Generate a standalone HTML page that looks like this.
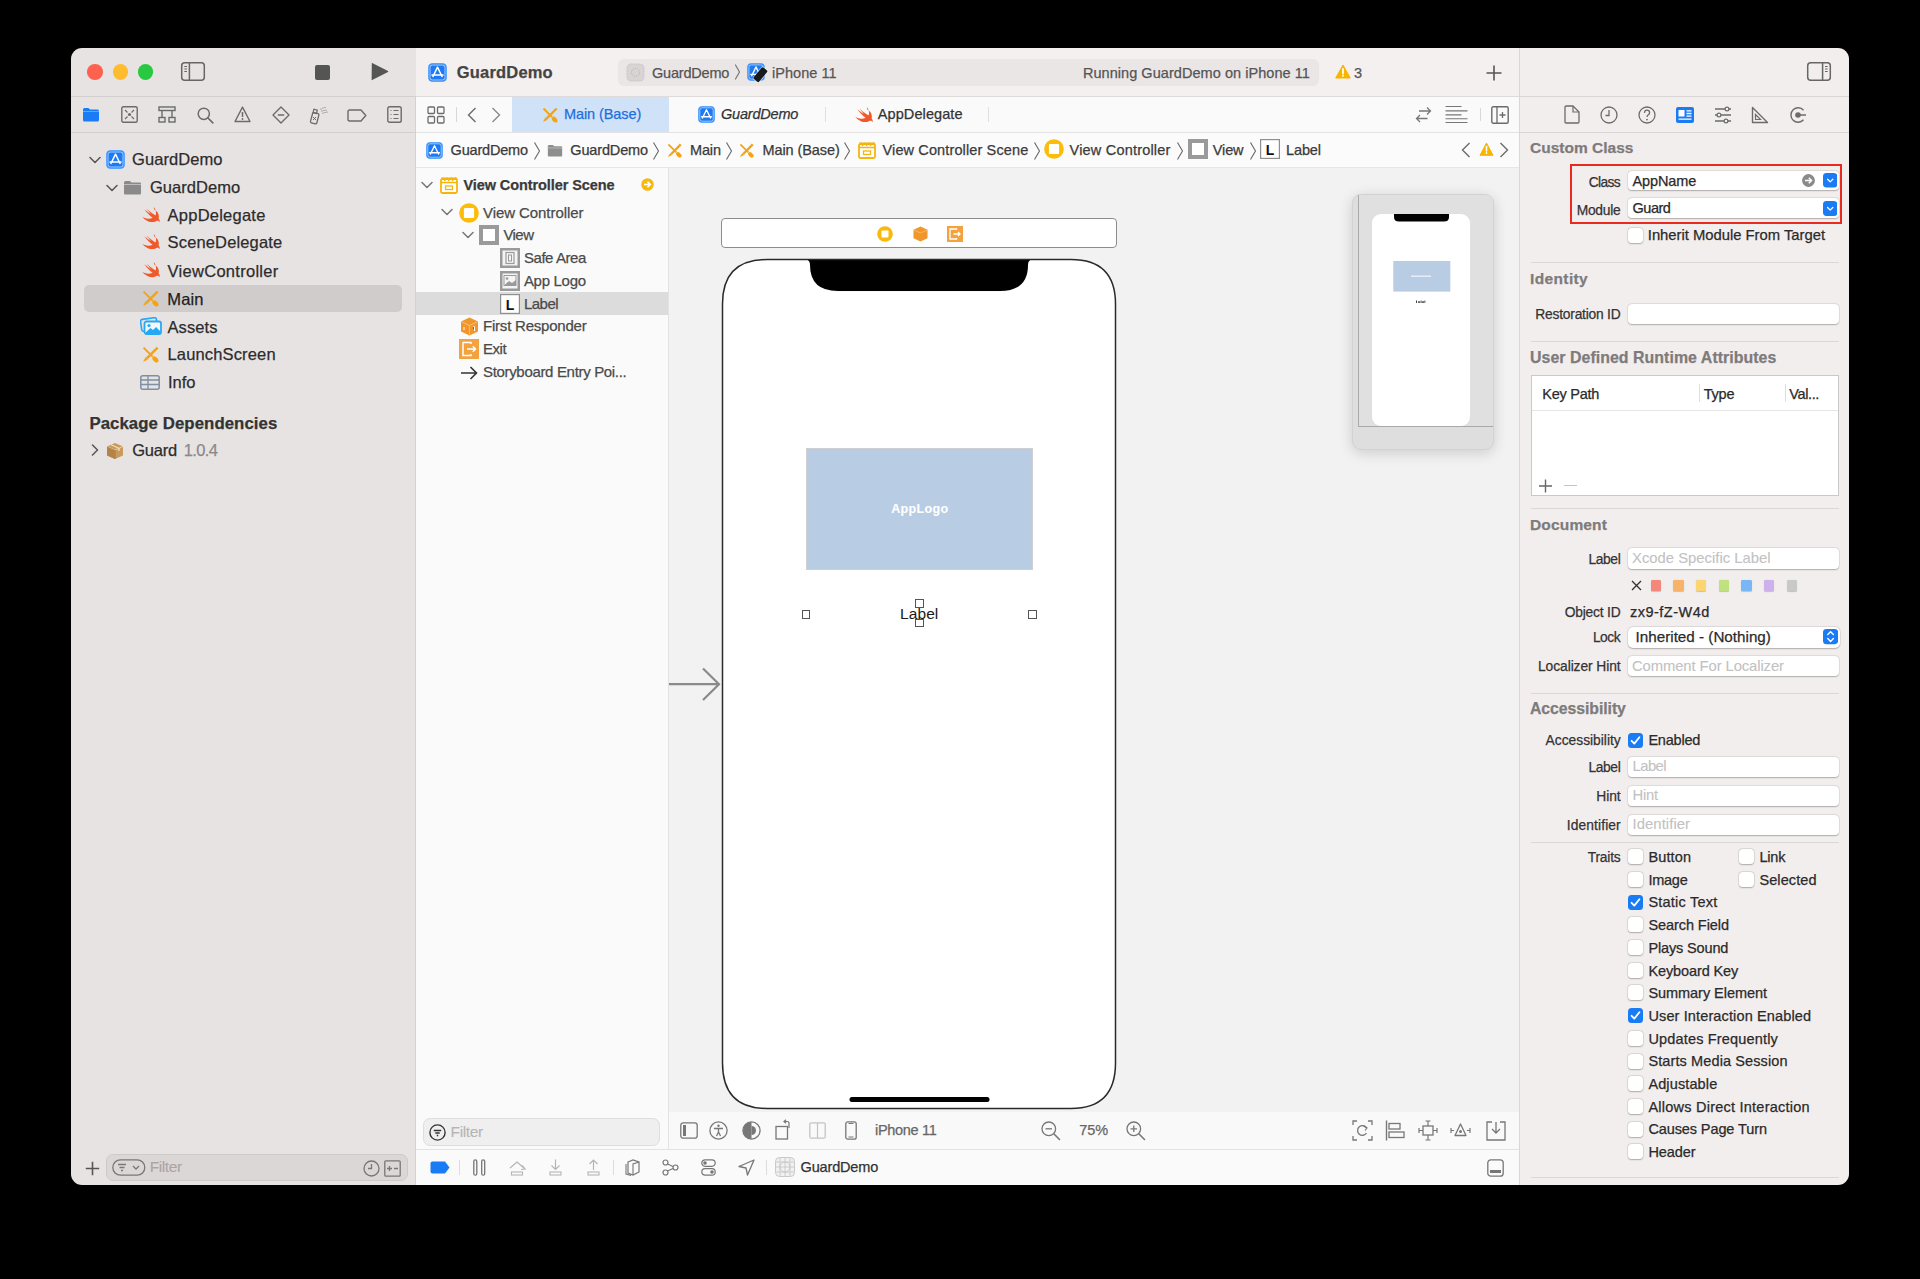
<!DOCTYPE html>
<html><head><meta charset="utf-8"><style>
html,body{margin:0;padding:0;width:1920px;height:1279px;overflow:hidden;background:#000;}
.win{position:absolute;left:71px;top:48px;width:1778px;height:1137px;border-radius:11px;overflow:hidden;}
.inner{position:absolute;left:-71px;top:-48px;width:1920px;height:1279px;}
.t{position:absolute;white-space:nowrap;font-family:"Liberation Sans",sans-serif;-webkit-text-stroke:0.25px currentColor;}
.r{position:absolute;display:block;}
</style></head><body><div class="win"><div class="inner">
<div class="r" style="left:71.00px;top:48.00px;width:345.00px;height:1137.00px;background:#e8e3e3;"></div>
<div class="r" style="left:415.00px;top:96.00px;width:1.00px;height:1089.00px;background:#d6d1d1;"></div>
<div class="r" style="left:416.00px;top:48.00px;width:1103.00px;height:48.00px;background:#f5f0f0;"></div>
<div class="r" style="left:1519.00px;top:48.00px;width:330.00px;height:1137.00px;background:#f3eeee;"></div>
<div class="r" style="left:1519.00px;top:48.00px;width:1.00px;height:1137.00px;background:#dcd7d7;"></div>
<div class="r" style="left:71.00px;top:96.00px;width:344.00px;height:1.00px;background:#d4cfcf;"></div>
<div class="r" style="left:416.00px;top:96.00px;width:1103.00px;height:1.00px;background:#e0dbdb;"></div>
<div class="r" style="left:1519.00px;top:96.00px;width:330.00px;height:1.00px;background:#dad5d5;"></div>
<div class="r" style="left:416.00px;top:97.00px;width:1103.00px;height:35.00px;background:#fafafa;"></div>
<div class="r" style="left:71.00px;top:132.00px;width:344.00px;height:1.00px;background:#d4cfcf;"></div>
<div class="r" style="left:416.00px;top:132.00px;width:1103.00px;height:1.00px;background:#e3e3e3;"></div>
<div class="r" style="left:1520.00px;top:132.00px;width:329.00px;height:1.00px;background:#dad5d5;"></div>
<div class="r" style="left:416.00px;top:133.00px;width:1103.00px;height:34.00px;background:#fbfbfb;"></div>
<div class="r" style="left:416.00px;top:167.00px;width:1103.00px;height:1.00px;background:#e6e6e6;"></div>
<div class="r" style="left:416.00px;top:168.00px;width:252.00px;height:981.00px;background:#fafafa;"></div>
<div class="r" style="left:668.00px;top:168.00px;width:1.00px;height:981.00px;background:#e2e2e2;"></div>
<div class="r" style="left:669.00px;top:168.00px;width:850.00px;height:944.00px;background:#f2f2f2;"></div>
<div class="r" style="left:669.00px;top:1112.00px;width:850.00px;height:37.00px;background:#f9f9f9;"></div>
<div class="r" style="left:416.00px;top:1149.00px;width:1103.00px;height:1.00px;background:#e3e3e3;"></div>
<div class="r" style="left:416.00px;top:1150.00px;width:1103.00px;height:35.00px;background:#fafafa;"></div>
<div class="r" style="left:87.20px;top:64.40px;width:15.6px;height:15.6px;border-radius:50%;background:#ff6150"></div>
<div class="r" style="left:112.50px;top:64.40px;width:15.6px;height:15.6px;border-radius:50%;background:#febc2e"></div>
<div class="r" style="left:137.70px;top:64.40px;width:15.6px;height:15.6px;border-radius:50%;background:#28c840"></div>
<svg class="r" style="left:180.00px;top:61.00px;" width="26" height="21" viewBox="0 0 26 21"><rect x="1.7" y="1.7" width="22.6" height="17.6" rx="3" fill="none" stroke="#666" stroke-width="1.5"/><path d="M9.4 2 V19" stroke="#666" stroke-width="1.5"/><path d="M4.3 5.5 H7 M4.3 8 H7 M4.3 10.5 H7" stroke="#666" stroke-width="1.2"/></svg>
<div class="r" style="left:315.00px;top:64.60px;width:15.20px;height:15.30px;background:#555;border-radius:2px;"></div>
<svg class="r" style="left:370.00px;top:62.00px;" width="20" height="19" viewBox="0 0 20 19"><path d="M1.8 1.2 Q1.5 0.6 2.2 0.9 L18 9 Q18.6 9.5 18 10 L2.2 18.1 Q1.5 18.4 1.6 17.7 Z" fill="#555"/></svg>
<svg class="r" style="left:428px;top:63px" width="19" height="19" viewBox="0 0 19 19"><rect x="0.5" y="0.5" width="18" height="18" rx="4" fill="#1d7af2" stroke="#5aa5ff" stroke-width="1"/><rect x="2" y="2" width="15" height="15" rx="2.5" fill="none" stroke="#cfe5ff" stroke-width="0.9" opacity="0.9"/><path d="M9.5 4.2 L5 13.5 M9.5 4.2 L14 13.5 M4 12 L15 12" stroke="#fff" stroke-width="1.5" stroke-linecap="round" fill="none"/></svg>
<div class="t" style="left:456.80px;top:64.43px;font-size:16.5px;line-height:16.5px;color:#444;font-weight:700;letter-spacing:0.18px;">GuardDemo</div>
<div class="r" style="left:618.00px;top:58.50px;width:701.00px;height:27.50px;background:#ebe6e6;border-radius:6px;"></div>
<svg class="r" style="left:626.00px;top:63.00px;" width="20" height="19" viewBox="0 0 20 19"><rect x="1" y="1" width="17" height="17" rx="4" fill="#d9d4d4" stroke="#c6c1c1" stroke-dasharray="1.5 1"/><circle cx="9.5" cy="9.5" r="4" fill="none" stroke="#bcb7b7" stroke-dasharray="1.2 1"/></svg>
<div class="t" style="left:652.00px;top:65.53px;font-size:14.5px;line-height:14.5px;color:#555;letter-spacing:-0.194px;">GuardDemo</div>
<svg class="r" style="left:734.00px;top:64.00px;" width="7" height="16" viewBox="0 0 7 16"><path d="M1.5 1 L5.5 8.0 L1.5 15" fill="none" stroke="#777" stroke-width="1.2" stroke-linecap="round" stroke-linejoin="round"/></svg>
<svg class="r" style="left:747px;top:63px" width="18" height="18" viewBox="0 0 19 19"><rect x="0.5" y="0.5" width="18" height="18" rx="4" fill="#1d7af2" stroke="#5aa5ff" stroke-width="1"/><rect x="2" y="2" width="15" height="15" rx="2.5" fill="none" stroke="#cfe5ff" stroke-width="0.9" opacity="0.9"/><path d="M9.5 4.2 L5 13.5 M9.5 4.2 L14 13.5 M4 12 L15 12" stroke="#fff" stroke-width="1.5" stroke-linecap="round" fill="none"/></svg>
<div class="r" style="left:757.00px;top:66.50px;width:6.50px;height:15.00px;background:#1a1a1a;border-radius:1.5px;transform:rotate(40deg);box-shadow:0 0 0 0.8px rgba(255,255,255,0.5)"></div>
<div class="t" style="left:772.00px;top:65.53px;font-size:14.5px;line-height:14.5px;color:#555;letter-spacing:0.046px;">iPhone 11</div>
<div class="t" style="left:1082.90px;top:65.53px;font-size:14.5px;line-height:14.5px;color:#555;letter-spacing:0.053px;">Running GuardDemo on iPhone 11</div>
<svg class="r" style="left:1335.00px;top:64.00px;" width="16" height="15" viewBox="0 0 16 15"><path d="M8 1 L15.3 14 H0.7 Z" fill="#f7b500" stroke="#f7b500" stroke-linejoin="round" stroke-width="1"/><path d="M8 5 V9.5" stroke="#fff" stroke-width="1.8" stroke-linecap="round"/><circle cx="8" cy="11.8" r="1" fill="#fff"/></svg>
<div class="t" style="left:1354.00px;top:65.53px;font-size:14.5px;line-height:14.5px;color:#555;">3</div>
<svg class="r" style="left:1486.00px;top:65.00px;" width="16" height="16" viewBox="0 0 16 16"><path d="M8 0.5 V15.5 M0.5 8 H15.5" stroke="#555" stroke-width="1.6"/></svg>
<svg class="r" style="left:1806.00px;top:61.00px;" width="26" height="21" viewBox="0 0 26 21"><rect x="1.7" y="1.7" width="22.6" height="17.6" rx="3" fill="none" stroke="#666" stroke-width="1.5"/><path d="M16.6 2 V19" stroke="#666" stroke-width="1.5"/><path d="M19 5.5 H21.7 M19 8 H21.7 M19 10.5 H21.7" stroke="#666" stroke-width="1.2"/></svg>
<svg class="r" style="left:82.00px;top:107.00px;" width="18" height="15" viewBox="0 0 18 15"><path d="M1 2.5 Q1 1 2.5 1 L6.5 1 L8 2.5 L15.5 2.5 Q17 2.5 17 4 L17 13 Q17 14.5 15.5 14.5 L2.5 14.5 Q1 14.5 1 13 Z" fill="#1a7cf5"/><rect x="1" y="4.2" width="16" height="0.8" fill="#e8e3e3" opacity="0.5"/></svg>
<svg class="r" style="left:120.50px;top:106.00px;" width="17" height="17" viewBox="0 0 17 17"><rect x="0.8" y="0.8" width="15.4" height="15.4" rx="1.5" fill="none" stroke="#6b6b6b" stroke-width="1.4"/><path d="M4 4 L6.5 6.5 M13 4 L10.5 6.5 M4 13 L6.5 10.5 M13 13 L10.5 10.5" stroke="#6b6b6b" stroke-width="1.2"/><circle cx="8.5" cy="8.5" r="1.6" fill="#6b6b6b"/></svg>
<svg class="r" style="left:158.00px;top:106.00px;" width="18" height="17" viewBox="0 0 18 17"><rect x="1" y="1" width="16" height="3.5" fill="none" stroke="#6b6b6b" stroke-width="1.4"/><path d="M4 4.5 V11.5 M14 4.5 V11.5" stroke="#6b6b6b" stroke-width="1.4"/><rect x="1" y="11.5" width="6" height="4.5" fill="none" stroke="#6b6b6b" stroke-width="1.4"/><rect x="11" y="11.5" width="6" height="4.5" fill="none" stroke="#6b6b6b" stroke-width="1.4"/></svg>
<svg class="r" style="left:196.50px;top:106.50px;" width="17" height="17" viewBox="0 0 17 17"><circle cx="6.8" cy="6.8" r="5.6" fill="none" stroke="#6b6b6b" stroke-width="1.5"/><path d="M11 11 L15.8 15.8" stroke="#6b6b6b" stroke-width="1.7" stroke-linecap="round"/></svg>
<svg class="r" style="left:234.00px;top:106.00px;" width="17" height="17" viewBox="0 0 17 17"><path d="M8.5 1.2 L16 15.5 H1 Z" fill="none" stroke="#6b6b6b" stroke-width="1.4" stroke-linejoin="round"/><path d="M8.5 6 V11" stroke="#6b6b6b" stroke-width="1.5"/><circle cx="8.5" cy="13" r="0.9" fill="#6b6b6b"/></svg>
<svg class="r" style="left:272.00px;top:106.00px;" width="18" height="18" viewBox="0 0 18 18"><path d="M9 1 L17 9 L9 17 L1 9 Z" fill="none" stroke="#6b6b6b" stroke-width="1.4" stroke-linejoin="round"/><path d="M5.8 9 H12.2" stroke="#6b6b6b" stroke-width="1.5"/></svg>
<svg class="r" style="left:309.00px;top:105.50px;" width="20" height="19" viewBox="0 0 20 19"><rect x="2.5" y="7" width="6.5" height="10.5" rx="1.2" fill="none" stroke="#6b6b6b" stroke-width="1.3" transform="rotate(15 5.7 12)"/><rect x="4.5" y="3.5" width="3.5" height="3.5" fill="none" stroke="#6b6b6b" stroke-width="1.2" transform="rotate(15 6 5)"/><path d="M4 11 L7 14 M7 11 L4 14" stroke="#6b6b6b" stroke-width="1"/><g fill="#6b6b6b"><circle cx="12" cy="3" r="0.6"/><circle cx="14" cy="2" r="0.6"/><circle cx="16" cy="1.5" r="0.6"/><circle cx="13" cy="5" r="0.6"/><circle cx="15" cy="4.5" r="0.6"/><circle cx="17" cy="4" r="0.6"/><circle cx="14" cy="7" r="0.6"/><circle cx="16" cy="6.5" r="0.6"/><circle cx="18" cy="6" r="0.6"/></g></svg>
<svg class="r" style="left:346.50px;top:108.50px;" width="20" height="13" viewBox="0 0 20 13"><path d="M2.5 1 H14 L18.8 6.5 L14 12 H2.5 Q1 12 1 10.5 V2.5 Q1 1 2.5 1 Z" fill="none" stroke="#6b6b6b" stroke-width="1.4" stroke-linejoin="round"/></svg>
<svg class="r" style="left:387.00px;top:106.00px;" width="15" height="17" viewBox="0 0 15 17"><rect x="0.8" y="0.8" width="13.4" height="15.4" rx="1.8" fill="none" stroke="#6b6b6b" stroke-width="1.4"/><path d="M3.5 4.5 H4.5 M6.5 4.5 H11.5 M3.5 8.5 H4.5 M6.5 8.5 H11.5 M3.5 12.5 H4.5 M6.5 12.5 H11.5" stroke="#6b6b6b" stroke-width="1.2"/></svg>
<svg class="r" style="left:88.50px;top:155.50px;" width="12" height="8" viewBox="0 0 12 8"><path d="M1 1.5 L6.0 6.5 L11 1.5" fill="none" stroke="#555" stroke-width="1.5" stroke-linecap="round" stroke-linejoin="round"/></svg>
<svg class="r" style="left:105.5px;top:149.8px" width="19" height="19" viewBox="0 0 19 19"><rect x="0.5" y="0.5" width="18" height="18" rx="4" fill="#1d7af2" stroke="#5aa5ff" stroke-width="1"/><rect x="2" y="2" width="15" height="15" rx="2.5" fill="none" stroke="#cfe5ff" stroke-width="0.9" opacity="0.9"/><path d="M9.5 4.2 L5 13.5 M9.5 4.2 L14 13.5 M4 12 L15 12" stroke="#fff" stroke-width="1.5" stroke-linecap="round" fill="none"/></svg>
<div class="t" style="left:132.10px;top:151.43px;font-size:16.5px;line-height:16.5px;color:#2c2c2c;letter-spacing:0.057px;">GuardDemo</div>
<svg class="r" style="left:106.00px;top:183.50px;" width="12" height="8" viewBox="0 0 12 8"><path d="M1 1.5 L6.0 6.5 L11 1.5" fill="none" stroke="#555" stroke-width="1.5" stroke-linecap="round" stroke-linejoin="round"/></svg>
<svg class="r" style="left:123.00px;top:180.00px;" width="19" height="15" viewBox="0 0 19 15"><path d="M1 2.5 Q1 1 2.5 1 L7 1 L8.5 2.5 L17 2.5 Q18 2.5 18 3.5 L18 13.5 Q18 14.5 17 14.5 L2 14.5 Q1 14.5 1 13.5 Z" fill="#8a8a8a"/><rect x="1" y="4" width="17" height="1" fill="#bdbdbd"/></svg>
<div class="t" style="left:149.90px;top:179.33px;font-size:16.5px;line-height:16.5px;color:#2c2c2c;letter-spacing:0.057px;">GuardDemo</div>
<svg class="r" style="left:141.90px;top:207.00px" width="17.8" height="15.2" viewBox="-1 0.9 21.5 19.1" preserveAspectRatio="none"><path d="M13.543 3.857c4.118 2.346 6.6 6.796 5.59 10.688-.047.189-.103.367-.165.545l.006-.006c2.037 2.508 1.478 5.19 1.213 4.682-1.088-2.13-3.114-1.586-4.14-1.052l-.2.115c-2.637 1.417-6.21 1.536-9.796.003a15.8 15.8 0 0 1-7.045-6.02c.814.604 1.69 1.134 2.622 1.569 3.774 1.773 7.547 1.65 10.208.002-3.788-2.912-7.009-6.701-9.4-9.793a12.59 12.59 0 0 1-.64-.833c2.855 2.613 7.370 5.879 8.99 6.788-3.42-3.609-6.448-8.05-6.3-7.91 5.418 5.49 10.46 8.591 10.46 8.591.18.101.316.186.42.254.103-.265.195-.538.266-.826.874-3.156-.124-6.765-2.315-9.72z" fill="#f0582a"/></svg>
<div class="t" style="left:167.60px;top:207.13px;font-size:16.5px;line-height:16.5px;color:#2c2c2c;letter-spacing:0.233px;">AppDelegate</div>
<svg class="r" style="left:141.90px;top:234.20px" width="17.8" height="15.2" viewBox="-1 0.9 21.5 19.1" preserveAspectRatio="none"><path d="M13.543 3.857c4.118 2.346 6.6 6.796 5.59 10.688-.047.189-.103.367-.165.545l.006-.006c2.037 2.508 1.478 5.19 1.213 4.682-1.088-2.13-3.114-1.586-4.14-1.052l-.2.115c-2.637 1.417-6.21 1.536-9.796.003a15.8 15.8 0 0 1-7.045-6.02c.814.604 1.69 1.134 2.622 1.569 3.774 1.773 7.547 1.65 10.208.002-3.788-2.912-7.009-6.701-9.4-9.793a12.59 12.59 0 0 1-.64-.833c2.855 2.613 7.370 5.879 8.99 6.788-3.42-3.609-6.448-8.05-6.3-7.91 5.418 5.49 10.46 8.591 10.46 8.591.18.101.316.186.42.254.103-.265.195-.538.266-.826.874-3.156-.124-6.765-2.315-9.72z" fill="#f0582a"/></svg>
<div class="t" style="left:167.60px;top:234.33px;font-size:16.5px;line-height:16.5px;color:#2c2c2c;letter-spacing:0.145px;">SceneDelegate</div>
<svg class="r" style="left:141.90px;top:262.40px" width="17.8" height="15.2" viewBox="-1 0.9 21.5 19.1" preserveAspectRatio="none"><path d="M13.543 3.857c4.118 2.346 6.6 6.796 5.59 10.688-.047.189-.103.367-.165.545l.006-.006c2.037 2.508 1.478 5.19 1.213 4.682-1.088-2.13-3.114-1.586-4.14-1.052l-.2.115c-2.637 1.417-6.21 1.536-9.796.003a15.8 15.8 0 0 1-7.045-6.02c.814.604 1.69 1.134 2.622 1.569 3.774 1.773 7.547 1.65 10.208.002-3.788-2.912-7.009-6.701-9.4-9.793a12.59 12.59 0 0 1-.64-.833c2.855 2.613 7.370 5.879 8.99 6.788-3.42-3.609-6.448-8.05-6.3-7.91 5.418 5.49 10.46 8.591 10.46 8.591.18.101.316.186.42.254.103-.265.195-.538.266-.826.874-3.156-.124-6.765-2.315-9.72z" fill="#f0582a"/></svg>
<div class="t" style="left:167.60px;top:262.53px;font-size:16.5px;line-height:16.5px;color:#2c2c2c;letter-spacing:0.281px;">ViewController</div>
<div class="r" style="left:84.00px;top:284.70px;width:317.60px;height:27.20px;background:#d1cccc;border-radius:5px;"></div>
<svg class="r" style="left:142.00px;top:290.00px;" width="17" height="17" viewBox="0 0 17 17"><path d="M15.6 1.6 L4.8 12.4" stroke="#f5a315" stroke-width="2.6"/><path d="M3.5 11.2 L5.9 13.6 L1 16 Z" fill="#f5a315"/><path d="M1.6 1.6 L10.6 10.6" stroke="#f5a315" stroke-width="2"/><ellipse cx="13.4" cy="13.4" rx="3.6" ry="2.3" transform="rotate(45 13.4 13.4)" fill="#f5a315"/></svg>
<div class="t" style="left:167.30px;top:290.78px;font-size:16.5px;line-height:16.5px;color:#1e1e1e;letter-spacing:0.098px;">Main</div>
<svg class="r" style="left:139.50px;top:317.00px;" width="22" height="18" viewBox="0 0 22 18"><rect x="1" y="1.5" width="16" height="12" rx="2" fill="none" stroke="#27a8f5" stroke-width="1.6" transform="rotate(-8 9 7)"/><rect x="4.5" y="4.5" width="16.5" height="12.5" rx="2" fill="#f2f7fb" stroke="#27a8f5" stroke-width="1.8"/><circle cx="9" cy="8.5" r="1.6" fill="#27a8f5"/><path d="M5.5 15.5 L10.5 11 L13 13 L16 10 L20 14 L20 16 L5.5 16Z" fill="#27a8f5"/></svg>
<div class="t" style="left:167.50px;top:318.53px;font-size:16.5px;line-height:16.5px;color:#2c2c2c;letter-spacing:0.1px;">Assets</div>
<svg class="r" style="left:142.00px;top:345.80px;" width="17" height="17" viewBox="0 0 17 17"><path d="M15.6 1.6 L4.8 12.4" stroke="#f5a315" stroke-width="2.6"/><path d="M3.5 11.2 L5.9 13.6 L1 16 Z" fill="#f5a315"/><path d="M1.6 1.6 L10.6 10.6" stroke="#f5a315" stroke-width="2"/><ellipse cx="13.4" cy="13.4" rx="3.6" ry="2.3" transform="rotate(45 13.4 13.4)" fill="#f5a315"/></svg>
<div class="t" style="left:167.50px;top:346.28px;font-size:16.5px;line-height:16.5px;color:#2c2c2c;letter-spacing:0.152px;">LaunchScreen</div>
<svg class="r" style="left:140.30px;top:374.50px;" width="20" height="15" viewBox="0 0 20 15"><rect x="0.8" y="0.8" width="18.4" height="13.4" rx="2" fill="none" stroke="#7d8fa3" stroke-width="1.5"/><path d="M1 5 H19 M1 9.5 H19 M8 1 V14" stroke="#7d8fa3" stroke-width="1.3"/></svg>
<div class="t" style="left:168.00px;top:373.83px;font-size:16.5px;line-height:16.5px;color:#2c2c2c;letter-spacing:-0.052px;">Info</div>
<div class="t" style="left:89.40px;top:415.78px;font-size:16.8px;line-height:16.8px;color:#333;font-weight:700;letter-spacing:0.072px;">Package Dependencies</div>
<svg class="r" style="left:91.00px;top:444.00px;" width="8" height="12" viewBox="0 0 8 12"><path d="M1.5 1 L6.5 6.0 L1.5 11" fill="none" stroke="#555" stroke-width="1.5" stroke-linecap="round" stroke-linejoin="round"/></svg>
<svg class="r" style="left:106.00px;top:441.50px;" width="18" height="18" viewBox="0 0 18 18"><path d="M9 1 L17 4.5 L17 13.5 L9 17 L1 13.5 L1 4.5 Z" fill="#c99a5b"/><path d="M1 4.5 L9 8 L17 4.5" fill="none" stroke="#e9d2a8" stroke-width="1"/><path d="M9 8 V17" stroke="#a57a40" stroke-width="1"/><path d="M1 4.5 L9 8 L9 17 L1 13.5Z" fill="#b38447"/><path d="M5 2.8 L13 6.3 L13 9" stroke="#f2e2c2" stroke-width="1.2" fill="none"/></svg>
<div class="t" style="left:132.20px;top:442.28px;font-size:16.5px;line-height:16.5px;color:#2c2c2c;letter-spacing:-0.218px;">Guard</div>
<div class="t" style="left:183.75px;top:442.28px;font-size:16.5px;line-height:16.5px;color:#8a8a8a;letter-spacing:-0.616px;">1.0.4</div>
<svg class="r" style="left:85.00px;top:1160.50px;" width="15" height="15" viewBox="0 0 15 15"><path d="M7.5 0.8 V14.2 M0.8 7.5 H14.2" stroke="#555" stroke-width="1.6"/></svg>
<div class="r" style="left:106.40px;top:1153.60px;width:301.40px;height:27.40px;background:#dcd7d7;border:1px solid #cfcaca;box-sizing:border-box;border-radius:7px;"></div>
<svg class="r" style="left:111.50px;top:1159.00px;" width="34" height="17" viewBox="0 0 34 17"><rect x="0.8" y="0.8" width="32" height="15.4" rx="7.7" fill="none" stroke="#777" stroke-width="1.3"/><path d="M6 5.5 H14 M7.5 8.5 H12.5 M9 11.5 H11" stroke="#777" stroke-width="1.3"/><path d="M21 7 L24 10 L27 7" fill="none" stroke="#777" stroke-width="1.3"/></svg>
<div class="t" style="left:149.70px;top:1159.08px;font-size:15.5px;line-height:15.5px;color:#a9a5a5;letter-spacing:-0.402px;-webkit-text-stroke:0.1px currentColor;">Filter</div>
<svg class="r" style="left:362.50px;top:1159.50px;" width="17" height="17" viewBox="0 0 17 17"><circle cx="8.5" cy="8.5" r="7.5" fill="none" stroke="#777" stroke-width="1.3"/><path d="M8.5 4 V8.5 H5" fill="none" stroke="#777" stroke-width="1.3"/></svg>
<svg class="r" style="left:384.00px;top:1159.50px;" width="17" height="17" viewBox="0 0 17 17"><rect x="0.8" y="0.8" width="15.4" height="15.4" rx="1" fill="none" stroke="#777" stroke-width="1.3"/><path d="M3 8.5 H8 M5.5 6 V11 M10 8.5 H14" stroke="#777" stroke-width="1.3"/></svg>
<svg class="r" style="left:426.50px;top:105.50px;" width="18" height="18" viewBox="0 0 18 18"><g fill="none" stroke="#6b6b6b" stroke-width="1.3"><rect x="1" y="1" width="6.5" height="6.5" rx="1"/><rect x="10.5" y="1" width="6.5" height="6.5" rx="1"/><rect x="1" y="10.5" width="6.5" height="6.5" rx="1"/><rect x="10.5" y="10.5" width="6.5" height="6.5" rx="1"/></g></svg>
<div class="r" style="left:455.50px;top:107.00px;width:1.00px;height:15.00px;background:#d8d8d8;"></div>
<svg class="r" style="left:467.00px;top:107.00px;" width="10" height="16" viewBox="0 0 10 16"><path d="M8.5 1 L1.5 8 L8.5 15" fill="none" stroke="#6b6b6b" stroke-width="1.4"/></svg>
<svg class="r" style="left:491.00px;top:107.00px;" width="10" height="16" viewBox="0 0 10 16"><path d="M1.5 1 L8.5 8 L1.5 15" fill="none" stroke="#8a8a8a" stroke-width="1.4"/></svg>
<div class="r" style="left:512.00px;top:97.00px;width:156.50px;height:35.00px;background:#cfe2f7;"></div>
<svg class="r" style="left:541.50px;top:106.50px;" width="16" height="16" viewBox="0 0 17 17"><path d="M15.6 1.6 L4.8 12.4" stroke="#f5a315" stroke-width="2.6"/><path d="M3.5 11.2 L5.9 13.6 L1 16 Z" fill="#f5a315"/><path d="M1.6 1.6 L10.6 10.6" stroke="#f5a315" stroke-width="2"/><ellipse cx="13.4" cy="13.4" rx="3.6" ry="2.3" transform="rotate(45 13.4 13.4)" fill="#f5a315"/></svg>
<div class="t" style="left:564.00px;top:107.43px;font-size:14.5px;line-height:14.5px;color:#1f6fe0;letter-spacing:-0.091px;">Main (Base)</div>
<svg class="r" style="left:697.5px;top:105.5px" width="17" height="17" viewBox="0 0 19 19"><rect x="0.5" y="0.5" width="18" height="18" rx="4" fill="#1d7af2" stroke="#5aa5ff" stroke-width="1"/><rect x="2" y="2" width="15" height="15" rx="2.5" fill="none" stroke="#cfe5ff" stroke-width="0.9" opacity="0.9"/><path d="M9.5 4.2 L5 13.5 M9.5 4.2 L14 13.5 M4 12 L15 12" stroke="#fff" stroke-width="1.5" stroke-linecap="round" fill="none"/></svg>
<div class="t" style="left:721.00px;top:107.43px;font-size:14.5px;line-height:14.5px;color:#333;font-style:italic;letter-spacing:-0.194px;">GuardDemo</div>
<div class="r" style="left:825.00px;top:107.00px;width:1.00px;height:15.00px;background:#e0e0e0;"></div>
<svg class="r" style="left:855.00px;top:106.50px" width="17.8" height="15.2" viewBox="-1 0.9 21.5 19.1" preserveAspectRatio="none"><path d="M13.543 3.857c4.118 2.346 6.6 6.796 5.59 10.688-.047.189-.103.367-.165.545l.006-.006c2.037 2.508 1.478 5.19 1.213 4.682-1.088-2.13-3.114-1.586-4.14-1.052l-.2.115c-2.637 1.417-6.21 1.536-9.796.003a15.8 15.8 0 0 1-7.045-6.02c.814.604 1.69 1.134 2.622 1.569 3.774 1.773 7.547 1.65 10.208.002-3.788-2.912-7.009-6.701-9.4-9.793a12.59 12.59 0 0 1-.64-.833c2.855 2.613 7.370 5.879 8.99 6.788-3.42-3.609-6.448-8.05-6.3-7.91 5.418 5.49 10.46 8.591 10.46 8.591.18.101.316.186.42.254.103-.265.195-.538.266-.826.874-3.156-.124-6.765-2.315-9.72z" fill="#f0582a"/></svg>
<div class="t" style="left:877.80px;top:107.43px;font-size:14.5px;line-height:14.5px;color:#333;letter-spacing:0.089px;">AppDelegate</div>
<div class="r" style="left:988.00px;top:107.00px;width:1.00px;height:15.00px;background:#e0e0e0;"></div>
<svg class="r" style="left:1415.00px;top:105.50px;" width="17" height="18" viewBox="0 0 17 18"><path d="M4 5 H15.5 M12 1.5 L15.5 5 L12 8.5" fill="none" stroke="#777" stroke-width="1.3"/><path d="M12.5 12.5 H1.5 M5 9 L1.5 12.5 L5 16" fill="none" stroke="#777" stroke-width="1.3"/></svg>
<svg class="r" style="left:1444.50px;top:104.80px;" width="24" height="18" viewBox="0 0 24 18"><path d="M0.5 1.5 H16.5 M0.5 5.9 H22.5 M0.5 9.8 H16.5 M0.5 13.7 H22.5 M0.5 17.5 H22.5" stroke="#777" stroke-width="1.15"/></svg>
<div class="r" style="left:1480.00px;top:108.00px;width:1.00px;height:13.00px;background:#d8d8d8;"></div>
<svg class="r" style="left:1490.50px;top:105.50px;" width="18" height="18" viewBox="0 0 18 18"><rect x="0.8" y="0.8" width="16.4" height="16.4" rx="1.5" fill="none" stroke="#6b6b6b" stroke-width="1.4"/><path d="M6 1 V17 M8.5 9 H14.5 M11.5 6 V12" stroke="#6b6b6b" stroke-width="1.3"/></svg>
<svg class="r" style="left:426px;top:141.5px" width="17" height="17" viewBox="0 0 19 19"><rect x="0.5" y="0.5" width="18" height="18" rx="4" fill="#1d7af2" stroke="#5aa5ff" stroke-width="1"/><rect x="2" y="2" width="15" height="15" rx="2.5" fill="none" stroke="#cfe5ff" stroke-width="0.9" opacity="0.9"/><path d="M9.5 4.2 L5 13.5 M9.5 4.2 L14 13.5 M4 12 L15 12" stroke="#fff" stroke-width="1.5" stroke-linecap="round" fill="none"/></svg>
<div class="t" style="left:450.60px;top:142.73px;font-size:14.5px;line-height:14.5px;color:#3a3a3a;letter-spacing:-0.194px;">GuardDemo</div>
<svg class="r" style="left:532.50px;top:141.00px;" width="8" height="20" viewBox="0 0 8 20"><path d="M1.5 1.5 L6.5 10 L1.5 18.5" fill="none" stroke="#666" stroke-width="1.1"/></svg>
<svg class="r" style="left:546.50px;top:143.50px;" width="16" height="13" viewBox="0 0 19 15"><path d="M1 2.5 Q1 1 2.5 1 L7 1 L8.5 2.5 L17 2.5 Q18 2.5 18 3.5 L18 13.5 Q18 14.5 17 14.5 L2 14.5 Q1 14.5 1 13.5 Z" fill="#8e8e8e"/><rect x="1" y="4" width="17" height="1" fill="#bdbdbd"/></svg>
<div class="t" style="left:570.30px;top:142.73px;font-size:14.5px;line-height:14.5px;color:#3a3a3a;letter-spacing:-0.157px;">GuardDemo</div>
<svg class="r" style="left:651.50px;top:141.00px;" width="8" height="20" viewBox="0 0 8 20"><path d="M1.5 1.5 L6.5 10 L1.5 18.5" fill="none" stroke="#666" stroke-width="1.1"/></svg>
<svg class="r" style="left:666.50px;top:143.00px;" width="15" height="15" viewBox="0 0 17 17"><path d="M15.6 1.6 L4.8 12.4" stroke="#f5a315" stroke-width="2.6"/><path d="M3.5 11.2 L5.9 13.6 L1 16 Z" fill="#f5a315"/><path d="M1.6 1.6 L10.6 10.6" stroke="#f5a315" stroke-width="2"/><ellipse cx="13.4" cy="13.4" rx="3.6" ry="2.3" transform="rotate(45 13.4 13.4)" fill="#f5a315"/></svg>
<div class="t" style="left:690.00px;top:142.73px;font-size:14.5px;line-height:14.5px;color:#3a3a3a;letter-spacing:-0.155px;">Main</div>
<svg class="r" style="left:724.50px;top:141.00px;" width="8" height="20" viewBox="0 0 8 20"><path d="M1.5 1.5 L6.5 10 L1.5 18.5" fill="none" stroke="#666" stroke-width="1.1"/></svg>
<svg class="r" style="left:738.50px;top:143.00px;" width="15" height="15" viewBox="0 0 17 17"><path d="M15.6 1.6 L4.8 12.4" stroke="#f5a315" stroke-width="2.6"/><path d="M3.5 11.2 L5.9 13.6 L1 16 Z" fill="#f5a315"/><path d="M1.6 1.6 L10.6 10.6" stroke="#f5a315" stroke-width="2"/><ellipse cx="13.4" cy="13.4" rx="3.6" ry="2.3" transform="rotate(45 13.4 13.4)" fill="#f5a315"/></svg>
<div class="t" style="left:762.50px;top:142.73px;font-size:14.5px;line-height:14.5px;color:#3a3a3a;letter-spacing:-0.095px;">Main (Base)</div>
<svg class="r" style="left:842.50px;top:141.00px;" width="8" height="20" viewBox="0 0 8 20"><path d="M1.5 1.5 L6.5 10 L1.5 18.5" fill="none" stroke="#666" stroke-width="1.1"/></svg>
<svg class="r" style="left:858.00px;top:140.50px;" width="18" height="18" viewBox="0 0 18 18"><rect x="1" y="3" width="16" height="14" rx="1.5" fill="#fff" stroke="#f5b50c" stroke-width="1.8"/><path d="M1 6.5 H17" stroke="#f5b50c" stroke-width="1.6"/><path d="M3 1.5 L5 5 M7 1.5 L9 5 M11 1.5 L13 5 M15 1.5 L17 4" stroke="#f5b50c" stroke-width="1.5"/><rect x="5.5" y="10" width="7" height="3.5" fill="none" stroke="#f5b50c" stroke-width="1.3"/><rect x="1" y="1" width="16" height="2.5" fill="#f5b50c" opacity="0.5"/></svg>
<div class="t" style="left:882.50px;top:142.73px;font-size:14.5px;line-height:14.5px;color:#3a3a3a;letter-spacing:0.126px;">View Controller Scene</div>
<svg class="r" style="left:1032.50px;top:141.00px;" width="8" height="20" viewBox="0 0 8 20"><path d="M1.5 1.5 L6.5 10 L1.5 18.5" fill="none" stroke="#666" stroke-width="1.1"/></svg>
<svg class="r" style="left:1044.00px;top:139.30px;" width="20" height="20" viewBox="0 0 20 20"><circle cx="10" cy="10" r="9.8" fill="#fbbc0c"/><rect x="4.9" y="4.9" width="10.2" height="10.2" rx="1.2" fill="#fff"/></svg>
<div class="t" style="left:1069.60px;top:142.73px;font-size:14.5px;line-height:14.5px;color:#3a3a3a;letter-spacing:0.193px;">View Controller</div>
<svg class="r" style="left:1175.50px;top:141.00px;" width="8" height="20" viewBox="0 0 8 20"><path d="M1.5 1.5 L6.5 10 L1.5 18.5" fill="none" stroke="#666" stroke-width="1.1"/></svg>
<svg class="r" style="left:1187.50px;top:139.30px;" width="20" height="20" viewBox="0 0 20 20"><rect x="0" y="0" width="20" height="20" fill="#9a9a9a"/><rect x="4" y="4" width="12" height="12" fill="#fff"/></svg>
<div class="t" style="left:1212.70px;top:142.73px;font-size:14.5px;line-height:14.5px;color:#3a3a3a;letter-spacing:-0.092px;">View</div>
<svg class="r" style="left:1248.50px;top:141.00px;" width="8" height="20" viewBox="0 0 8 20"><path d="M1.5 1.5 L6.5 10 L1.5 18.5" fill="none" stroke="#666" stroke-width="1.1"/></svg>
<svg class="r" style="left:1260.30px;top:139.30px;" width="20" height="20" viewBox="0 0 20 20"><rect x="0.6" y="0.6" width="18.8" height="18.8" fill="#fff" stroke="#8f8f8f" stroke-width="1.2"/><text x="10" y="15.5" text-anchor="middle" font-family="Liberation Sans, sans-serif" font-weight="700" font-size="14" fill="#111">L</text></svg>
<div class="t" style="left:1286.00px;top:142.73px;font-size:14.5px;line-height:14.5px;color:#3a3a3a;letter-spacing:-0.113px;">Label</div>
<svg class="r" style="left:1461.00px;top:141.50px;" width="10" height="16" viewBox="0 0 10 16"><path d="M8.5 1 L1.5 8 L8.5 15" fill="none" stroke="#6b6b6b" stroke-width="1.4"/></svg>
<svg class="r" style="left:1478.50px;top:141.50px;" width="15" height="14" viewBox="0 0 15 14"><path d="M7.5 1 L14 13.3 H1 Z" fill="#f7b500" stroke="#f7b500" stroke-linejoin="round"/><path d="M7.5 4.5 V9" stroke="#fff" stroke-width="1.6" stroke-linecap="round"/><circle cx="7.5" cy="11" r="0.9" fill="#fff"/></svg>
<svg class="r" style="left:1499.00px;top:141.50px;" width="10" height="16" viewBox="0 0 10 16"><path d="M1.5 1 L8.5 8 L1.5 15" fill="none" stroke="#6b6b6b" stroke-width="1.4"/></svg>
<svg class="r" style="left:421.00px;top:180.50px;" width="12" height="8" viewBox="0 0 12 8"><path d="M1 1.5 L6.0 6.5 L11 1.5" fill="none" stroke="#777" stroke-width="1.5" stroke-linecap="round" stroke-linejoin="round"/></svg>
<svg class="r" style="left:440.00px;top:176.00px;" width="18" height="18" viewBox="0 0 18 18"><rect x="1" y="3" width="16" height="14" rx="1.5" fill="#fff" stroke="#f5b50c" stroke-width="1.8"/><path d="M1 6.5 H17" stroke="#f5b50c" stroke-width="1.6"/><path d="M3 1.5 L5 5 M7 1.5 L9 5 M11 1.5 L13 5 M15 1.5 L17 4" stroke="#f5b50c" stroke-width="1.5"/><rect x="5.5" y="10" width="7" height="3.5" fill="none" stroke="#f5b50c" stroke-width="1.3"/><rect x="1" y="1" width="16" height="2.5" fill="#f5b50c" opacity="0.5"/></svg>
<div class="t" style="left:463.50px;top:177.73px;font-size:14.5px;line-height:14.5px;color:#3a3a3a;font-weight:700;letter-spacing:-0.091px;">View Controller Scene</div>
<svg class="r" style="left:640.50px;top:178.20px;" width="13" height="13" viewBox="0 0 13 13"><circle cx="6.5" cy="6.5" r="6.3" fill="#f9b90b"/><path d="M3 6.5 H9 M6.5 3.8 L9.3 6.5 L6.5 9.2" fill="none" stroke="#fff" stroke-width="1.6"/></svg>
<svg class="r" style="left:441.00px;top:208.00px;" width="12" height="8" viewBox="0 0 12 8"><path d="M1 1.5 L6.0 6.5 L11 1.5" fill="none" stroke="#777" stroke-width="1.5" stroke-linecap="round" stroke-linejoin="round"/></svg>
<svg class="r" style="left:459.00px;top:202.70px;" width="20" height="20" viewBox="0 0 20 20"><circle cx="10" cy="10" r="9.8" fill="#fbbc0c"/><rect x="4.9" y="4.9" width="10.2" height="10.2" rx="1.2" fill="#fff"/></svg>
<div class="t" style="left:483.00px;top:204.50px;font-size:15px;line-height:15px;color:#4a4a4a;letter-spacing:-0.07px;">View Controller</div>
<svg class="r" style="left:461.50px;top:231.00px;" width="12" height="8" viewBox="0 0 12 8"><path d="M1 1.5 L6.0 6.5 L11 1.5" fill="none" stroke="#777" stroke-width="1.5" stroke-linecap="round" stroke-linejoin="round"/></svg>
<svg class="r" style="left:479.00px;top:225.20px;" width="20" height="20" viewBox="0 0 20 20"><rect x="0" y="0" width="20" height="20" fill="#9a9a9a"/><rect x="4" y="4" width="12" height="12" fill="#fff"/></svg>
<div class="t" style="left:503.40px;top:227.00px;font-size:15px;line-height:15px;color:#4a4a4a;letter-spacing:-0.55px;">View</div>
<svg class="r" style="left:499.50px;top:248.00px;" width="20" height="20" viewBox="0 0 20 20"><rect x="0" y="0" width="20" height="20" fill="#9a9a9a"/><rect x="2.5" y="2.5" width="15" height="15" fill="#f4f4f4"/><rect x="6" y="4.5" width="8" height="11" fill="none" stroke="#9a9a9a" stroke-width="1.2"/><rect x="8.5" y="7" width="3" height="6" fill="none" stroke="#9a9a9a" stroke-width="1"/></svg>
<div class="t" style="left:523.90px;top:250.10px;font-size:15px;line-height:15px;color:#4a4a4a;letter-spacing:-0.428px;">Safe Area</div>
<svg class="r" style="left:499.50px;top:271.00px;" width="20" height="20" viewBox="0 0 20 20"><rect x="0" y="0" width="20" height="20" fill="#9a9a9a"/><rect x="2.5" y="2.5" width="15" height="15" fill="#f4f4f4"/><rect x="4" y="4.5" width="12" height="10" fill="none" stroke="#9a9a9a" stroke-width="1"/><circle cx="7" cy="7.5" r="1.3" fill="#9a9a9a"/><path d="M4 14.5 L9 10 L12 12 L16 9 V14.5Z" fill="#9a9a9a"/></svg>
<div class="t" style="left:523.90px;top:272.60px;font-size:15px;line-height:15px;color:#4a4a4a;letter-spacing:-0.3px;">App Logo</div>
<div class="r" style="left:416.00px;top:292.30px;width:252.00px;height:22.50px;background:#dcdcdc;"></div>
<svg class="r" style="left:499.50px;top:293.60px;" width="20" height="20" viewBox="0 0 20 20"><rect x="0.6" y="0.6" width="18.8" height="18.8" fill="#fff" stroke="#8f8f8f" stroke-width="1.2"/><text x="10" y="15.5" text-anchor="middle" font-family="Liberation Sans, sans-serif" font-weight="700" font-size="14" fill="#111">L</text></svg>
<div class="t" style="left:523.90px;top:295.50px;font-size:15px;line-height:15px;color:#4a4a4a;letter-spacing:-0.494px;">Label</div>
<svg class="r" style="left:459.50px;top:317.00px;" width="19" height="19" viewBox="0 0 19 19"><path d="M9.5 0.5 L18 4.5 L18 14.5 L9.5 18.5 L1 14.5 L1 4.5 Z" fill="#f0962a"/><path d="M1 4.5 L9.5 8.5 L18 4.5" fill="none" stroke="#f9c27a" stroke-width="1"/><path d="M9.5 8.5 V18.5" stroke="#f9c27a" stroke-width="0.8"/><path d="M4 10 V13 M13 10 L14.5 9.5 V14" stroke="#fff" stroke-width="1"/></svg>
<div class="t" style="left:483.00px;top:318.30px;font-size:15px;line-height:15px;color:#4a4a4a;letter-spacing:-0.216px;">First Responder</div>
<svg class="r" style="left:459.30px;top:339.00px;" width="20" height="20" viewBox="0 0 20 20"><rect x="0" y="0" width="20" height="20" fill="#f3a23d"/><path d="M12 5 V3.5 H4 V16.5 H12 V15" fill="none" stroke="#fff" stroke-width="1.5"/><path d="M8 10 H16.5 M13.8 7.3 L16.5 10 L13.8 12.7" fill="none" stroke="#fff" stroke-width="1.5"/></svg>
<div class="t" style="left:483.00px;top:340.90px;font-size:15px;line-height:15px;color:#4a4a4a;letter-spacing:-0.458px;">Exit</div>
<svg class="r" style="left:460.00px;top:366.00px;" width="18" height="14" viewBox="0 0 18 14"><path d="M1 7 H16.5 M10.5 1 L16.5 7 L10.5 13" fill="none" stroke="#333" stroke-width="1.6"/></svg>
<div class="t" style="left:483.00px;top:364.00px;font-size:15px;line-height:15px;color:#4a4a4a;letter-spacing:-0.327px;">Storyboard Entry Poi...</div>
<div class="r" style="left:422.60px;top:1118.30px;width:237.00px;height:27.40px;background:#efefef;border:1px solid #dedede;box-sizing:border-box;border-radius:7px;"></div>
<svg class="r" style="left:428.50px;top:1123.50px;" width="17" height="17" viewBox="0 0 17 17"><circle cx="8.5" cy="8.5" r="7.6" fill="none" stroke="#333" stroke-width="1.4"/><path d="M4.8 6.5 H12.2 M6.3 9 H10.7 M7.8 11.5 H9.2" stroke="#333" stroke-width="1.3"/></svg>
<div class="t" style="left:450.60px;top:1124.08px;font-size:15.5px;line-height:15.5px;color:#b5b5b5;letter-spacing:-0.362px;-webkit-text-stroke:0.1px currentColor;">Filter</div>
<div class="r" style="left:721.00px;top:218.00px;width:396.00px;height:30.00px;background:#fff;border:1px solid #8c8c8c;box-sizing:border-box;border-radius:4px;"></div>
<svg class="r" style="left:877.00px;top:225.50px;" width="16" height="16" viewBox="0 0 16 16"><circle cx="8" cy="8" r="7.8" fill="#f9b90b"/><rect x="4.5" y="4.5" width="7" height="7" rx="0.8" fill="#fff"/></svg>
<svg class="r" style="left:912.50px;top:225.50px;" width="15" height="16" viewBox="0 0 15 16"><path d="M7.5 0.5 L14.5 3.8 L14.5 12.2 L7.5 15.5 L0.5 12.2 L0.5 3.8 Z" fill="#f0962a"/><path d="M0.5 3.8 L7.5 7 L14.5 3.8" fill="none" stroke="#f9c27a" stroke-width="0.8"/></svg>
<svg class="r" style="left:947.00px;top:225.50px;" width="16" height="16" viewBox="0 0 16 16"><rect x="0" y="0" width="16" height="16" fill="#f3a23d"/><path d="M9.5 4 V3 H3 V13 H9.5 V12" fill="none" stroke="#fff" stroke-width="1.3"/><path d="M6.5 8 H13 M11 6 L13 8 L11 10" fill="none" stroke="#fff" stroke-width="1.3"/></svg>
<svg class="r" style="left:720.00px;top:257.00px;" width="398" height="854" viewBox="0 0 398 854"><path d="M2.5 47 Q2.5 2.5 47 2.5 L87 2.5 Q90 2.5 90 6 Q90 34.5 118 34.5 L280 34.5 Q308 34.5 308 6 Q308 2.5 311 2.5 L351 2.5 Q395.5 2.5 395.5 47 L395.5 806 Q395.5 851.5 351 851.5 L47 851.5 Q2.5 851.5 2.5 806 Z" fill="#fff"/><path d="M86 2.5 L312 2.5 Q308 3 308 8 Q308 34 280 34 L118 34 Q90 34 90 8 Q90 3 86 2.5 Z" fill="#000"/><path d="M2.5 47 Q2.5 2.5 47 2.5 L351 2.5 Q395.5 2.5 395.5 47 L395.5 806 Q395.5 851.5 351 851.5 L47 851.5 Q2.5 851.5 2.5 806 Z" fill="none" stroke="#2a2a2a" stroke-width="1.5"/><rect x="129.5" y="840" width="140" height="5" rx="2.5" fill="#000"/></svg>
<div class="r" style="left:805.50px;top:448.00px;width:227.70px;height:121.50px;background:#b8cce4;border:1.5px solid #d0d0d0;box-sizing:border-box;"></div>
<div class="t" style="left:891.25px;top:503.17px;font-size:12.5px;line-height:12.5px;color:#fff;font-weight:700;letter-spacing:0.323px;-webkit-text-stroke:0.1px currentColor;">AppLogo</div>
<div class="t" style="left:900.00px;top:605.63px;font-size:15.5px;line-height:15.5px;color:#1a1a1a;letter-spacing:0.088px;-webkit-text-stroke:0">Label</div>
<div class="r" style="left:801.70px;top:610.00px;width:8.80px;height:8.80px;background:#fff;border:1.5px solid #555;box-sizing:border-box;"></div>
<div class="r" style="left:1028.00px;top:610.00px;width:8.80px;height:8.80px;background:#fff;border:1.5px solid #555;box-sizing:border-box;"></div>
<div class="r" style="left:915.00px;top:599.40px;width:8.80px;height:8.80px;background:#fff;border:1.5px solid #555;box-sizing:border-box;"></div>
<div class="r" style="left:915.00px;top:618.70px;width:8.80px;height:8.80px;background:#fff;border:1.5px solid #555;box-sizing:border-box;"></div>
<svg class="r" style="left:668.00px;top:666.00px;" width="54" height="36" viewBox="0 0 54 36"><path d="M1 18.2 H51 M35 2.5 L51 18.2 L35 34" fill="none" stroke="#8a8a8a" stroke-width="2.2"/></svg>
<div class="r" style="left:1352.00px;top:193.60px;width:142.00px;height:256.40px;background:#dedede;border:1px solid #d2d2d2;box-sizing:border-box;border-radius:9px;box-shadow:0 3px 14px rgba(0,0,0,0.16);"></div>
<div class="r" style="left:1358.00px;top:194.50px;width:135.00px;height:232.50px;background:#e0e0e0;border-left:1.2px solid #a9a9a9;border-bottom:1.2px solid #a9a9a9;box-sizing:border-box;border-top-right-radius:8px;"></div>
<svg class="r" style="left:1371.50px;top:214.00px;" width="98" height="212" viewBox="0 0 98 212"><rect x="0" y="0" width="98" height="212" rx="9" fill="#fff"/><path d="M22 0 H77 V3 Q77 7.5 72 7.5 H27 Q22 7.5 22 3 Z" fill="#000"/><rect x="21.3" y="47" width="57" height="30.6" fill="#b8cce4"/><rect x="44" y="86.5" width="1" height="2.5" fill="#444"/><rect x="46" y="87.2" width="2.2" height="1.8" fill="#666"/><rect x="48.6" y="86.5" width="1" height="2.5" fill="#555"/><rect x="50" y="87.2" width="2" height="1.8" fill="#666"/><rect x="52.4" y="86.5" width="0.9" height="2.5" fill="#444"/><rect x="39" y="61.5" width="20" height="1.4" fill="#fff" opacity="0.7"/></svg>
<svg class="r" style="left:679.50px;top:1121.50px;" width="18" height="17" viewBox="0 0 18 17"><rect x="0.8" y="0.8" width="16.4" height="15.4" rx="2.5" fill="none" stroke="#777" stroke-width="1.3"/><rect x="3" y="3" width="3" height="11" fill="#777"/></svg>
<svg class="r" style="left:708.50px;top:1121.00px;" width="19" height="19" viewBox="0 0 19 19"><circle cx="9.5" cy="9.5" r="8.6" fill="none" stroke="#777" stroke-width="1.3"/><circle cx="9.5" cy="4.8" r="1.2" fill="#777"/><path d="M5 7.5 H14 M9.5 7.5 V11 M9.5 11 L7.5 15 M9.5 11 L11.5 15" fill="none" stroke="#777" stroke-width="1.3"/></svg>
<svg class="r" style="left:741.50px;top:1121.00px;" width="19" height="19" viewBox="0 0 19 19"><circle cx="9.5" cy="9.5" r="8.6" fill="none" stroke="#777" stroke-width="1.3"/><path d="M9.5 1 A8.5 8.5 0 0 0 9.5 18 Z" fill="#777"/><path d="M9.5 5 A4.5 4.5 0 0 1 9.5 14 Z" fill="#777"/></svg>
<svg class="r" style="left:774.50px;top:1119.00px;" width="20" height="21" viewBox="0 0 20 21"><rect x="1" y="7.5" width="11.5" height="12.5" fill="none" stroke="#777" stroke-width="1.3"/><path d="M14 9 V4.5 Q14 2.5 12 2.5 L9 2.5 M11 0.8 L9 2.5 L11 4.2" fill="none" stroke="#777" stroke-width="1.2"/></svg>
<svg class="r" style="left:809.00px;top:1121.50px;" width="17" height="17" viewBox="0 0 17 17"><rect x="0.8" y="0.8" width="15.4" height="15.4" rx="1.5" fill="none" stroke="#c4c4c4" stroke-width="1.3"/><path d="M8.5 1 V16" stroke="#c4c4c4" stroke-width="1.2"/></svg>
<svg class="r" style="left:845.00px;top:1120.50px;" width="12" height="19" viewBox="0 0 12 19"><rect x="0.8" y="0.8" width="10.4" height="17.4" rx="2" fill="none" stroke="#777" stroke-width="1.3"/><path d="M3.5 2.5 H8.5 M3.5 16 H8.5" stroke="#777" stroke-width="1"/></svg>
<div class="t" style="left:875.00px;top:1122.73px;font-size:14.5px;line-height:14.5px;color:#666;letter-spacing:-0.311px;">iPhone 11</div>
<svg class="r" style="left:1041.00px;top:1120.50px;" width="20" height="20" viewBox="0 0 20 20"><circle cx="7.8" cy="7.8" r="6.8" fill="none" stroke="#777" stroke-width="1.3"/><path d="M4.5 7.8 H11" stroke="#777" stroke-width="1.3"/><path d="M12.8 12.8 L18.5 18.5" stroke="#777" stroke-width="1.6" stroke-linecap="round"/></svg>
<div class="t" style="left:1079.25px;top:1122.73px;font-size:14.5px;line-height:14.5px;color:#666;letter-spacing:-0.125px;">75%</div>
<svg class="r" style="left:1126.00px;top:1120.50px;" width="20" height="20" viewBox="0 0 20 20"><circle cx="7.8" cy="7.8" r="6.8" fill="none" stroke="#777" stroke-width="1.3"/><path d="M4.5 7.8 H11 M7.8 4.5 V11" stroke="#777" stroke-width="1.3"/><path d="M12.8 12.8 L18.5 18.5" stroke="#777" stroke-width="1.6" stroke-linecap="round"/></svg>
<svg class="r" style="left:1351.50px;top:1120.00px;" width="21" height="21" viewBox="0 0 21 21"><path d="M1 5 V1 H5 M16 1 H20 V5 M20 16 V20 H16 M5 20 H1 V16" fill="none" stroke="#777" stroke-width="1.3"/><path d="M14.5 8 A4.8 4.8 0 1 0 14.5 13" fill="none" stroke="#777" stroke-width="1.3"/><path d="M12 6 L15 8 L13 10.5" fill="none" stroke="#777" stroke-width="1.2"/></svg>
<svg class="r" style="left:1384.50px;top:1120.00px;" width="20" height="21" viewBox="0 0 20 21"><path d="M1.5 0.5 V20.5" stroke="#777" stroke-width="1.4"/><rect x="4" y="3.5" width="11" height="5.5" fill="none" stroke="#777" stroke-width="1.3"/><rect x="4" y="12" width="15" height="5.5" fill="none" stroke="#777" stroke-width="1.3"/></svg>
<svg class="r" style="left:1417.50px;top:1120.00px;" width="20" height="21" viewBox="0 0 20 21"><rect x="5" y="6" width="10" height="9" fill="none" stroke="#777" stroke-width="1.3"/><path d="M10 1 V6 M10 15 V20 M7.5 1 H12.5 M7.5 20 H12.5 M1 10.5 H5 M15 10.5 H19 M1 8 V13 M19 8 V13" fill="none" stroke="#777" stroke-width="1.2"/></svg>
<svg class="r" style="left:1450.00px;top:1121.00px;" width="21" height="19" viewBox="0 0 21 19"><path d="M10.5 3 L16 14.5 H5 Z" fill="none" stroke="#777" stroke-width="1.3" stroke-linejoin="round"/><circle cx="10.5" cy="10.5" r="1.5" fill="#777"/><path d="M1 9.5 H4 M17 9.5 H20 M1 7 V12 M20 7 V12" fill="none" stroke="#777" stroke-width="1.2"/></svg>
<svg class="r" style="left:1486.00px;top:1120.50px;" width="20" height="20" viewBox="0 0 20 20"><path d="M6 1 H1 V19 H19 V1 H14" fill="none" stroke="#777" stroke-width="1.3"/><path d="M10 1 V12 M6 8 L10 12 L14 8" fill="none" stroke="#777" stroke-width="1.3"/></svg>
<svg class="r" style="left:429.50px;top:1161.00px;" width="20" height="13" viewBox="0 0 20 13"><path d="M2.5 0.5 H15 L19.5 6.5 L15 12.5 H2.5 Q0.5 12.5 0.5 10.5 V2.5 Q0.5 0.5 2.5 0.5 Z" fill="#1a7cf5"/></svg>
<div class="r" style="left:459.00px;top:1160.00px;width:1.00px;height:15.00px;background:#dcdcdc;"></div>
<svg class="r" style="left:473.00px;top:1159.00px;" width="13" height="17" viewBox="0 0 13 17"><rect x="0.8" y="0.8" width="3" height="15.4" rx="1.5" fill="none" stroke="#777" stroke-width="1.3"/><rect x="8.7" y="0.8" width="3" height="15.4" rx="1.5" fill="none" stroke="#777" stroke-width="1.3"/></svg>
<svg class="r" style="left:508.50px;top:1159.00px;" width="18" height="17" viewBox="0 0 18 17"><path d="M1 9 L8 3 L15 9" fill="none" stroke="#b5b5b5" stroke-width="1.2"/><path d="M13 6.5 L16 10 L12 10.5" fill="none" stroke="#b5b5b5" stroke-width="1.2"/><rect x="2.5" y="13" width="11" height="3" fill="none" stroke="#b5b5b5" stroke-width="1.1"/></svg>
<svg class="r" style="left:548.50px;top:1159.00px;" width="13" height="17" viewBox="0 0 13 17"><path d="M6.5 0.5 V10 M2.5 6.5 L6.5 10.5 L10.5 6.5" fill="none" stroke="#b5b5b5" stroke-width="1.2"/><rect x="1" y="13" width="11" height="3" fill="none" stroke="#b5b5b5" stroke-width="1.1"/></svg>
<svg class="r" style="left:586.50px;top:1159.00px;" width="13" height="17" viewBox="0 0 13 17"><path d="M6.5 11 V1 M2.5 5 L6.5 1 L10.5 5" fill="none" stroke="#b5b5b5" stroke-width="1.2"/><rect x="1" y="13" width="11" height="3" fill="none" stroke="#b5b5b5" stroke-width="1.1"/></svg>
<div class="r" style="left:612.50px;top:1160.00px;width:1.00px;height:15.00px;background:#dcdcdc;"></div>
<svg class="r" style="left:624.50px;top:1159.00px;" width="15" height="17" viewBox="0 0 15 17"><path d="M3 3 L8 1 L14 3 V13 L8 16 L3 14 Z" fill="none" stroke="#777" stroke-width="1.2"/><path d="M1 5 V15 L6 16.5 M8 16 V5 L14 3" fill="none" stroke="#777" stroke-width="1.1"/></svg>
<svg class="r" style="left:661.50px;top:1159.00px;" width="17" height="17" viewBox="0 0 17 17"><circle cx="3.5" cy="3.5" r="2.5" fill="none" stroke="#777" stroke-width="1.2"/><circle cx="3.5" cy="13.5" r="2.5" fill="none" stroke="#777" stroke-width="1.2"/><circle cx="13.5" cy="8.5" r="2.5" fill="none" stroke="#777" stroke-width="1.2"/><path d="M5.5 5 L11 7.5 M5.5 12 L11 9.5" stroke="#777" stroke-width="1.2"/></svg>
<svg class="r" style="left:700.50px;top:1159.00px;" width="15" height="17" viewBox="0 0 15 17"><rect x="0.8" y="0.8" width="13.4" height="6.5" rx="3.2" fill="none" stroke="#777" stroke-width="1.2"/><circle cx="4" cy="4" r="1.8" fill="#777"/><rect x="0.8" y="9.7" width="13.4" height="6.5" rx="3.2" fill="none" stroke="#777" stroke-width="1.2"/><circle cx="11" cy="13" r="1.8" fill="#777"/></svg>
<svg class="r" style="left:738.00px;top:1159.00px;" width="17" height="17" viewBox="0 0 17 17"><path d="M16 1 L1 7.5 L8 9 L9.5 16 Z" fill="none" stroke="#777" stroke-width="1.3" stroke-linejoin="round"/></svg>
<div class="r" style="left:765.50px;top:1160.00px;width:1.00px;height:15.00px;background:#dcdcdc;"></div>
<svg class="r" style="left:775.00px;top:1157.00px;" width="20" height="20" viewBox="0 0 20 20"><rect x="0.5" y="0.5" width="19" height="19" rx="4" fill="#f0f0f0" stroke="#c9c9c9"/><g stroke="#c0c0c0" stroke-width="0.7" fill="none"><path d="M5 1 V19 M10 1 V19 M15 1 V19 M1 5 H19 M1 10 H19 M1 15 H19"/><circle cx="10" cy="10" r="5"/></g></svg>
<div class="t" style="left:800.50px;top:1159.73px;font-size:14.5px;line-height:14.5px;color:#333;letter-spacing:-0.15px;">GuardDemo</div>
<svg class="r" style="left:1486.50px;top:1158.50px;" width="17" height="18" viewBox="0 0 17 18"><rect x="0.8" y="0.8" width="15.4" height="16.4" rx="3" fill="none" stroke="#777" stroke-width="1.3"/><rect x="3" y="11" width="11" height="3" fill="#777"/></svg>
<svg class="r" style="left:1563.50px;top:105.00px;" width="16" height="19" viewBox="0 0 16 19"><path d="M1 2.2 Q1 1 2.2 1 L9 1 L15 7 L15 16.8 Q15 18 13.8 18 L2.2 18 Q1 18 1 16.8 Z" fill="none" stroke="#6b6b6b" stroke-width="1.3" stroke-linejoin="round"/><path d="M9 1 V7 H15" fill="none" stroke="#6b6b6b" stroke-width="1.2"/></svg>
<svg class="r" style="left:1600.00px;top:105.50px;" width="18" height="18" viewBox="0 0 18 18"><circle cx="9" cy="9" r="8" fill="none" stroke="#6b6b6b" stroke-width="1.3"/><path d="M9 4 V9.5 H5.5" fill="none" stroke="#6b6b6b" stroke-width="1.3"/></svg>
<svg class="r" style="left:1638.00px;top:105.50px;" width="18" height="18" viewBox="0 0 18 18"><circle cx="9" cy="9" r="8" fill="none" stroke="#6b6b6b" stroke-width="1.3"/><path d="M6.5 7 Q6.5 4.2 9 4.2 Q11.6 4.2 11.6 6.7 Q11.6 8.3 9.8 9.2 Q9 9.7 9 11" fill="none" stroke="#6b6b6b" stroke-width="1.3"/><circle cx="9" cy="13.6" r="0.9" fill="#6b6b6b"/></svg>
<svg class="r" style="left:1676.00px;top:106.50px;" width="18" height="16" viewBox="0 0 18 16"><rect x="0" y="0" width="18" height="16" rx="2" fill="#1a7cf5"/><rect x="2.5" y="3" width="6" height="6.5" fill="#fff"/><path d="M10.5 3.8 H15.5 M10.5 6.5 H15.5 M10.5 9.2 H15.5 M2.5 12.2 H15.5" stroke="#fff" stroke-width="1.3"/></svg>
<svg class="r" style="left:1713.50px;top:105.50px;" width="18" height="18" viewBox="0 0 18 18"><path d="M1 3 H17 M1 9 H17 M1 15 H17" stroke="#6b6b6b" stroke-width="1.3"/><circle cx="13" cy="3" r="1.9" fill="#f3eeee" stroke="#6b6b6b" stroke-width="1.2"/><circle cx="5" cy="9" r="1.9" fill="#f3eeee" stroke="#6b6b6b" stroke-width="1.2"/><circle cx="12" cy="15" r="1.9" fill="#f3eeee" stroke="#6b6b6b" stroke-width="1.2"/></svg>
<svg class="r" style="left:1751.00px;top:105.50px;" width="18" height="18" viewBox="0 0 18 18"><path d="M1.5 1.5 V16.5 H16.5 Z" fill="none" stroke="#6b6b6b" stroke-width="1.4" stroke-linejoin="round"/><path d="M4.5 8.5 V13.5 H9.5 Z" fill="none" stroke="#6b6b6b" stroke-width="1.2"/></svg>
<svg class="r" style="left:1789.00px;top:105.50px;" width="18" height="18" viewBox="0 0 18 18"><path d="M14.5 4.2 A7.2 7.2 0 1 0 14.5 13.8" fill="none" stroke="#6b6b6b" stroke-width="1.4"/><circle cx="9" cy="9" r="2.8" fill="#6b6b6b"/><path d="M9 9 H17" stroke="#6b6b6b" stroke-width="1.4"/></svg>
<div class="t" style="left:1530.00px;top:139.98px;font-size:15.5px;line-height:15.5px;color:#7d7b7b;font-weight:700;letter-spacing:0.001px;">Custom Class</div>
<div class="t" style="left:1588.75px;top:176.42px;font-size:13.8px;line-height:13.8px;color:#333;letter-spacing:-0.637px;">Class</div>
<div class="r" style="left:1628.00px;top:170.60px;width:210.80px;height:19.40px;background:#fff;border-radius:4px;box-shadow:0 0.6px 1.4px rgba(0,0,0,0.25), 0 0 0 0.5px rgba(0,0,0,0.07);"></div>
<div class="t" style="left:1632.60px;top:173.83px;font-size:14.5px;line-height:14.5px;color:#2a2a2a;letter-spacing:-0.142px;">AppName</div>
<svg class="r" style="left:1802.00px;top:174.00px;" width="13" height="13" viewBox="0 0 13 13"><circle cx="6.5" cy="6.5" r="6.4" fill="#8a8a8a"/><path d="M3 6.5 H9.5 M6.8 3.8 L9.5 6.5 L6.8 9.2" fill="none" stroke="#fff" stroke-width="1.5"/></svg>
<svg class="r" style="left:1822.80px;top:173.20px;" width="14.400000000000091" height="14.600000000000023" viewBox="0 0 14.400000000000091 14.600000000000023"><rect x="0" y="0" width="14.400000000000091" height="14.600000000000023" rx="3.5" fill="#1a7cf5"/><path d="M4.600000000000046 6.300000000000011 L7.2000000000000455 8.900000000000011 L9.800000000000045 6.300000000000011" fill="none" stroke="#fff" stroke-width="1.3" stroke-linecap="round" stroke-linejoin="round"/></svg>
<div class="t" style="left:1576.70px;top:203.92px;font-size:13.8px;line-height:13.8px;color:#333;letter-spacing:-0.253px;">Module</div>
<div class="r" style="left:1628.00px;top:198.10px;width:210.80px;height:19.80px;background:#fff;border-radius:4px;box-shadow:0 0.6px 1.4px rgba(0,0,0,0.25), 0 0 0 0.5px rgba(0,0,0,0.07);"></div>
<div class="t" style="left:1632.60px;top:201.33px;font-size:14.5px;line-height:14.5px;color:#2a2a2a;letter-spacing:-0.502px;">Guard</div>
<svg class="r" style="left:1822.80px;top:200.70px;" width="14.400000000000091" height="15.0" viewBox="0 0 14.400000000000091 15.0"><rect x="0" y="0" width="14.400000000000091" height="15.0" rx="3.5" fill="#1a7cf5"/><path d="M4.600000000000046 6.5 L7.2000000000000455 9.1 L9.800000000000045 6.5" fill="none" stroke="#fff" stroke-width="1.3" stroke-linecap="round" stroke-linejoin="round"/></svg>
<div class="r" style="left:1569.80px;top:164.30px;width:272.20px;height:59.70px;background:none;border:2.2px solid #ea2a1e;box-sizing:border-box;"></div>
<div class="r" style="left:1627.50px;top:228.20px;width:15.00px;height:15.00px;background:#fff;border-radius:3.5px;box-shadow:0 0.5px 1.5px rgba(0,0,0,0.25), 0 0 0 0.5px rgba(0,0,0,0.1);"></div>
<div class="t" style="left:1647.80px;top:228.47px;font-size:14.8px;line-height:14.8px;color:#2a2a2a;letter-spacing:-0.007px;">Inherit Module From Target</div>
<div class="r" style="left:1530.50px;top:262.00px;width:308.50px;height:1.00px;background:#dcd7d7;"></div>
<div class="t" style="left:1530.00px;top:271.28px;font-size:15.5px;line-height:15.5px;color:#7d7b7b;font-weight:700;letter-spacing:0.371px;">Identity</div>
<div class="t" style="left:1535.30px;top:307.72px;font-size:13.8px;line-height:13.8px;color:#333;letter-spacing:-0.214px;">Restoration ID</div>
<div class="r" style="left:1627.60px;top:303.80px;width:211.20px;height:20.50px;background:#fff;border-radius:4px;box-shadow:0 0.6px 1.4px rgba(0,0,0,0.25), 0 0 0 0.5px rgba(0,0,0,0.07);"></div>
<div class="r" style="left:1530.50px;top:340.50px;width:308.50px;height:1.00px;background:#dcd7d7;"></div>
<div class="t" style="left:1530.00px;top:349.54px;font-size:15.9px;line-height:15.9px;color:#7d7b7b;font-weight:700;letter-spacing:0.049px;">User Defined Runtime Attributes</div>
<div class="r" style="left:1531.00px;top:374.60px;width:307.50px;height:121.40px;background:#fff;border:1px solid #c9c9c9;box-sizing:border-box;"></div>
<div class="r" style="left:1532.00px;top:410.00px;width:305.50px;height:1.00px;background:#e6e6e6;"></div>
<div class="r" style="left:1698.50px;top:383.50px;width:1.00px;height:18.50px;background:#dedede;"></div>
<div class="r" style="left:1784.50px;top:383.50px;width:1.00px;height:18.50px;background:#dedede;"></div>
<div class="t" style="left:1542.30px;top:386.63px;font-size:14.5px;line-height:14.5px;color:#2a2a2a;letter-spacing:-0.267px;">Key Path</div>
<div class="t" style="left:1703.80px;top:386.63px;font-size:14.5px;line-height:14.5px;color:#2a2a2a;letter-spacing:-0.255px;">Type</div>
<div class="t" style="left:1789.30px;top:386.63px;font-size:14.5px;line-height:14.5px;color:#2a2a2a;letter-spacing:-0.394px;">Val...</div>
<svg class="r" style="left:1537.50px;top:478.50px;" width="15" height="14" viewBox="0 0 15 14"><path d="M7.5 0.5 V13.5 M1 7 H14" stroke="#666" stroke-width="1.4"/></svg>
<div class="r" style="left:1563.50px;top:485.00px;width:13.50px;height:1.30px;background:#c4c4c4;"></div>
<div class="r" style="left:1530.50px;top:507.50px;width:308.50px;height:1.00px;background:#dcd7d7;"></div>
<div class="t" style="left:1530.00px;top:516.58px;font-size:15.5px;line-height:15.5px;color:#7d7b7b;font-weight:700;letter-spacing:0.158px;">Document</div>
<div class="t" style="left:1588.40px;top:552.92px;font-size:13.8px;line-height:13.8px;color:#333;letter-spacing:-0.36px;">Label</div>
<div class="r" style="left:1627.80px;top:548.40px;width:211.20px;height:20.60px;background:#fff;border-radius:4px;box-shadow:0 0.6px 1.4px rgba(0,0,0,0.25), 0 0 0 0.5px rgba(0,0,0,0.07);"></div>
<div class="t" style="left:1632.00px;top:550.97px;font-size:14.8px;line-height:14.8px;color:#c2c2c2;letter-spacing:0.019px;-webkit-text-stroke:0.1px currentColor;">Xcode Specific Label</div>
<svg class="r" style="left:1630.50px;top:579.50px;" width="11" height="11" viewBox="0 0 11 11"><path d="M1 1 L10 10 M10 1 L1 10" stroke="#333" stroke-width="1.4"/></svg>
<div class="r" style="left:1650.60px;top:580.00px;width:10.70px;height:10.70px;background:#f3877a;border-radius:1.5px;box-shadow:0 0.5px 1px rgba(0,0,0,0.2);"></div>
<div class="r" style="left:1673.10px;top:580.00px;width:10.70px;height:10.70px;background:#f8b36a;border-radius:1.5px;box-shadow:0 0.5px 1px rgba(0,0,0,0.2);"></div>
<div class="r" style="left:1695.60px;top:580.00px;width:10.70px;height:10.70px;background:#fbd56f;border-radius:1.5px;box-shadow:0 0.5px 1px rgba(0,0,0,0.2);"></div>
<div class="r" style="left:1718.50px;top:580.00px;width:10.70px;height:10.70px;background:#bfe27e;border-radius:1.5px;box-shadow:0 0.5px 1px rgba(0,0,0,0.2);"></div>
<div class="r" style="left:1741.00px;top:580.00px;width:10.70px;height:10.70px;background:#78b6f5;border-radius:1.5px;box-shadow:0 0.5px 1px rgba(0,0,0,0.2);"></div>
<div class="r" style="left:1763.70px;top:580.00px;width:10.70px;height:10.70px;background:#cdb0ec;border-radius:1.5px;box-shadow:0 0.5px 1px rgba(0,0,0,0.2);"></div>
<div class="r" style="left:1786.60px;top:580.00px;width:10.70px;height:10.70px;background:#c9c9c9;border-radius:1.5px;box-shadow:0 0.5px 1px rgba(0,0,0,0.2);"></div>
<div class="t" style="left:1564.75px;top:606.02px;font-size:13.8px;line-height:13.8px;color:#333;letter-spacing:-0.199px;">Object ID</div>
<div class="t" style="left:1630.00px;top:604.63px;font-size:14.5px;line-height:14.5px;color:#2a2a2a;letter-spacing:0.49px;">zx9-fZ-W4d</div>
<div class="t" style="left:1592.90px;top:631.32px;font-size:13.8px;line-height:13.8px;color:#333;letter-spacing:-0.462px;">Lock</div>
<div class="r" style="left:1627.8px;top:627.2px;width:212.2px;height:20.6px;border-radius:5px;background:#fff;box-shadow:0 0.5px 1.5px rgba(0,0,0,0.25), 0 0 0 0.5px rgba(0,0,0,0.08);"></div>
<div class="t" style="left:1635.60px;top:629.33px;font-size:15.2px;line-height:15.2px;color:#2a2a2a;letter-spacing:0.01px;">Inherited - (Nothing)</div>
<svg class="r" style="left:1822.60px;top:629.40px;" width="15.200000000000045" height="15.200000000000045" viewBox="0 0 15.200000000000045 15.200000000000045"><rect x="0" y="0" width="15.200000000000045" height="15.200000000000045" rx="3.5" fill="#1a7cf5"/><path d="M4.800000000000023 5.600000000000023 L7.600000000000023 2.800000000000023 L10.400000000000023 5.600000000000023 M4.800000000000023 9.600000000000023 L7.600000000000023 12.400000000000023 L10.400000000000023 9.600000000000023" fill="none" stroke="#fff" stroke-width="1.4" stroke-linecap="round" stroke-linejoin="round"/></svg>
<div class="t" style="left:1538.00px;top:660.37px;font-size:13.8px;line-height:13.8px;color:#333;letter-spacing:-0.071px;">Localizer Hint</div>
<div class="r" style="left:1627.80px;top:655.90px;width:211.20px;height:20.10px;background:#fff;border-radius:4px;box-shadow:0 0.6px 1.4px rgba(0,0,0,0.25), 0 0 0 0.5px rgba(0,0,0,0.07);"></div>
<div class="t" style="left:1632.00px;top:658.72px;font-size:14.8px;line-height:14.8px;color:#c2c2c2;letter-spacing:-0.089px;-webkit-text-stroke:0.1px currentColor;">Comment For Localizer</div>
<div class="r" style="left:1530.50px;top:692.50px;width:308.50px;height:1.00px;background:#dcd7d7;"></div>
<div class="t" style="left:1530.00px;top:701.38px;font-size:15.8px;line-height:15.8px;color:#7d7b7b;font-weight:700;letter-spacing:-0.06px;">Accessibility</div>
<div class="t" style="left:1545.60px;top:734.42px;font-size:13.8px;line-height:13.8px;color:#333;letter-spacing:-0.003px;">Accessibility</div>
<svg class="r" style="left:1627.80px;top:733.10px;" width="15" height="15" viewBox="0 0 15 15"><rect x="0" y="0" width="15" height="15" rx="3.5" fill="#1a7cf5"/><path d="M3.6 7.8 L6.3 10.6 L11.4 4.3" fill="none" stroke="#fff" stroke-width="1.8" stroke-linecap="round" stroke-linejoin="round"/></svg>
<div class="t" style="left:1648.40px;top:733.03px;font-size:14.5px;line-height:14.5px;color:#2a2a2a;letter-spacing:-0.219px;">Enabled</div>
<div class="t" style="left:1588.40px;top:760.72px;font-size:13.8px;line-height:13.8px;color:#333;letter-spacing:-0.36px;">Label</div>
<div class="r" style="left:1627.80px;top:757.00px;width:211.20px;height:20.20px;background:#fff;border-radius:4px;box-shadow:0 0.6px 1.4px rgba(0,0,0,0.25), 0 0 0 0.5px rgba(0,0,0,0.07);"></div>
<div class="t" style="left:1632.50px;top:759.07px;font-size:14.8px;line-height:14.8px;color:#c2c2c2;letter-spacing:-0.522px;-webkit-text-stroke:0.1px currentColor;">Label</div>
<div class="t" style="left:1596.25px;top:789.72px;font-size:13.8px;line-height:13.8px;color:#333;letter-spacing:-0.038px;">Hint</div>
<div class="r" style="left:1627.80px;top:786.00px;width:211.20px;height:20.20px;background:#fff;border-radius:4px;box-shadow:0 0.6px 1.4px rgba(0,0,0,0.25), 0 0 0 0.5px rgba(0,0,0,0.07);"></div>
<div class="t" style="left:1632.50px;top:788.07px;font-size:14.8px;line-height:14.8px;color:#c2c2c2;letter-spacing:-0.248px;-webkit-text-stroke:0.1px currentColor;">Hint</div>
<div class="t" style="left:1566.80px;top:818.82px;font-size:13.8px;line-height:13.8px;color:#333;letter-spacing:0.109px;">Identifier</div>
<div class="r" style="left:1627.80px;top:815.10px;width:211.20px;height:20.20px;background:#fff;border-radius:4px;box-shadow:0 0.6px 1.4px rgba(0,0,0,0.25), 0 0 0 0.5px rgba(0,0,0,0.07);"></div>
<div class="t" style="left:1632.50px;top:817.17px;font-size:14.8px;line-height:14.8px;color:#c2c2c2;letter-spacing:0.082px;-webkit-text-stroke:0.1px currentColor;">Identifier</div>
<div class="r" style="left:1530.50px;top:841.50px;width:308.50px;height:1.00px;background:#dcd7d7;"></div>
<div class="t" style="left:1587.80px;top:850.72px;font-size:13.8px;line-height:13.8px;color:#333;letter-spacing:-0.223px;">Traits</div>
<div class="r" style="left:1627.80px;top:849.40px;width:15.00px;height:15.00px;background:#fff;border-radius:3.5px;box-shadow:0 0.5px 1.5px rgba(0,0,0,0.25), 0 0 0 0.5px rgba(0,0,0,0.1);"></div>
<div class="t" style="left:1648.40px;top:850.13px;font-size:14.5px;line-height:14.5px;color:#2a2a2a;letter-spacing:0.139px;">Button</div>
<div class="r" style="left:1627.80px;top:872.08px;width:15.00px;height:15.00px;background:#fff;border-radius:3.5px;box-shadow:0 0.5px 1.5px rgba(0,0,0,0.25), 0 0 0 0.5px rgba(0,0,0,0.1);"></div>
<div class="t" style="left:1648.40px;top:872.81px;font-size:14.5px;line-height:14.5px;color:#2a2a2a;letter-spacing:-0.24px;">Image</div>
<svg class="r" style="left:1627.80px;top:894.76px;" width="15" height="15" viewBox="0 0 15 15"><rect x="0" y="0" width="15" height="15" rx="3.5" fill="#1a7cf5"/><path d="M3.6 7.8 L6.3 10.6 L11.4 4.3" fill="none" stroke="#fff" stroke-width="1.8" stroke-linecap="round" stroke-linejoin="round"/></svg>
<div class="t" style="left:1648.40px;top:895.49px;font-size:14.5px;line-height:14.5px;color:#2a2a2a;letter-spacing:0.217px;">Static Text</div>
<div class="r" style="left:1627.80px;top:917.44px;width:15.00px;height:15.00px;background:#fff;border-radius:3.5px;box-shadow:0 0.5px 1.5px rgba(0,0,0,0.25), 0 0 0 0.5px rgba(0,0,0,0.1);"></div>
<div class="t" style="left:1648.40px;top:918.17px;font-size:14.5px;line-height:14.5px;color:#2a2a2a;letter-spacing:-0.074px;">Search Field</div>
<div class="r" style="left:1627.80px;top:940.12px;width:15.00px;height:15.00px;background:#fff;border-radius:3.5px;box-shadow:0 0.5px 1.5px rgba(0,0,0,0.25), 0 0 0 0.5px rgba(0,0,0,0.1);"></div>
<div class="t" style="left:1648.40px;top:940.85px;font-size:14.5px;line-height:14.5px;color:#2a2a2a;letter-spacing:-0.142px;">Plays Sound</div>
<div class="r" style="left:1627.80px;top:962.80px;width:15.00px;height:15.00px;background:#fff;border-radius:3.5px;box-shadow:0 0.5px 1.5px rgba(0,0,0,0.25), 0 0 0 0.5px rgba(0,0,0,0.1);"></div>
<div class="t" style="left:1648.40px;top:963.53px;font-size:14.5px;line-height:14.5px;color:#2a2a2a;letter-spacing:-0.105px;">Keyboard Key</div>
<div class="r" style="left:1627.80px;top:985.48px;width:15.00px;height:15.00px;background:#fff;border-radius:3.5px;box-shadow:0 0.5px 1.5px rgba(0,0,0,0.25), 0 0 0 0.5px rgba(0,0,0,0.1);"></div>
<div class="t" style="left:1648.40px;top:986.21px;font-size:14.5px;line-height:14.5px;color:#2a2a2a;letter-spacing:-0.047px;">Summary Element</div>
<svg class="r" style="left:1627.80px;top:1008.16px;" width="15" height="15" viewBox="0 0 15 15"><rect x="0" y="0" width="15" height="15" rx="3.5" fill="#1a7cf5"/><path d="M3.6 7.8 L6.3 10.6 L11.4 4.3" fill="none" stroke="#fff" stroke-width="1.8" stroke-linecap="round" stroke-linejoin="round"/></svg>
<div class="t" style="left:1648.40px;top:1008.89px;font-size:14.5px;line-height:14.5px;color:#2a2a2a;letter-spacing:0.132px;">User Interaction Enabled</div>
<div class="r" style="left:1627.80px;top:1030.84px;width:15.00px;height:15.00px;background:#fff;border-radius:3.5px;box-shadow:0 0.5px 1.5px rgba(0,0,0,0.25), 0 0 0 0.5px rgba(0,0,0,0.1);"></div>
<div class="t" style="left:1648.40px;top:1031.57px;font-size:14.5px;line-height:14.5px;color:#2a2a2a;letter-spacing:0.17px;">Updates Frequently</div>
<div class="r" style="left:1627.80px;top:1053.52px;width:15.00px;height:15.00px;background:#fff;border-radius:3.5px;box-shadow:0 0.5px 1.5px rgba(0,0,0,0.25), 0 0 0 0.5px rgba(0,0,0,0.1);"></div>
<div class="t" style="left:1648.40px;top:1054.25px;font-size:14.5px;line-height:14.5px;color:#2a2a2a;letter-spacing:0.114px;">Starts Media Session</div>
<div class="r" style="left:1627.80px;top:1076.20px;width:15.00px;height:15.00px;background:#fff;border-radius:3.5px;box-shadow:0 0.5px 1.5px rgba(0,0,0,0.25), 0 0 0 0.5px rgba(0,0,0,0.1);"></div>
<div class="t" style="left:1648.40px;top:1076.93px;font-size:14.5px;line-height:14.5px;color:#2a2a2a;letter-spacing:0.121px;">Adjustable</div>
<div class="r" style="left:1627.80px;top:1098.88px;width:15.00px;height:15.00px;background:#fff;border-radius:3.5px;box-shadow:0 0.5px 1.5px rgba(0,0,0,0.25), 0 0 0 0.5px rgba(0,0,0,0.1);"></div>
<div class="t" style="left:1648.40px;top:1099.61px;font-size:14.5px;line-height:14.5px;color:#2a2a2a;letter-spacing:0.237px;">Allows Direct Interaction</div>
<div class="r" style="left:1627.80px;top:1121.56px;width:15.00px;height:15.00px;background:#fff;border-radius:3.5px;box-shadow:0 0.5px 1.5px rgba(0,0,0,0.25), 0 0 0 0.5px rgba(0,0,0,0.1);"></div>
<div class="t" style="left:1648.40px;top:1122.29px;font-size:14.5px;line-height:14.5px;color:#2a2a2a;letter-spacing:-0.102px;">Causes Page Turn</div>
<div class="r" style="left:1627.80px;top:1144.24px;width:15.00px;height:15.00px;background:#fff;border-radius:3.5px;box-shadow:0 0.5px 1.5px rgba(0,0,0,0.25), 0 0 0 0.5px rgba(0,0,0,0.1);"></div>
<div class="t" style="left:1648.40px;top:1144.97px;font-size:14.5px;line-height:14.5px;color:#2a2a2a;letter-spacing:-0.052px;">Header</div>
<div class="r" style="left:1739.10px;top:849.40px;width:15.00px;height:15.00px;background:#fff;border-radius:3.5px;box-shadow:0 0.5px 1.5px rgba(0,0,0,0.25), 0 0 0 0.5px rgba(0,0,0,0.1);"></div>
<div class="t" style="left:1759.40px;top:850.13px;font-size:14.5px;line-height:14.5px;color:#2a2a2a;letter-spacing:-0.16px;">Link</div>
<div class="r" style="left:1739.10px;top:872.08px;width:15.00px;height:15.00px;background:#fff;border-radius:3.5px;box-shadow:0 0.5px 1.5px rgba(0,0,0,0.25), 0 0 0 0.5px rgba(0,0,0,0.1);"></div>
<div class="t" style="left:1759.40px;top:872.81px;font-size:14.5px;line-height:14.5px;color:#2a2a2a;letter-spacing:0.114px;">Selected</div>
<div class="r" style="left:1531.00px;top:1176.50px;width:308.00px;height:1.00px;background:#dcd7d7;"></div>
</div></div></body></html>
